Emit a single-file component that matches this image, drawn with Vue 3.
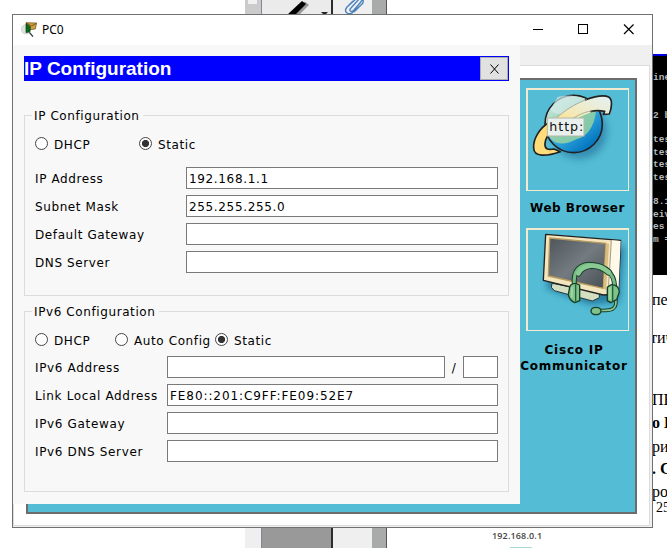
<script setup>
const ipv4 = [
  { label: 'IP Address', value: '192.168.1.1' },
  { label: 'Subnet Mask', value: '255.255.255.0' },
  { label: 'Default Gateway', value: '' },
  { label: 'DNS Server', value: '' },
]
const ipv6 = [
  { label: 'IPv6 Address', value: '', prefix: true },
  { label: 'Link Local Address', value: 'FE80::201:C9FF:FE09:52E7' },
  { label: 'IPv6 Gateway', value: '' },
  { label: 'IPv6 DNS Server', value: '' },
]
const terminal = ['', 'ine', '', '', '2 b', '', 'tes', 'tes', 'tes', 'tes', '', '8.1', 'eiv', 'es ', 'm =']
const paragraph = [
  { text: 'пен', height: 38 },
  { text: 'тич', height: 62, nudge: true },
  { text: 'ПЕ', height: 23 },
  { text: 'о В', height: 24, bold: true },
  { text: 'ри', height: 22 },
  { text: '. С', height: 23, bold: true },
  { text: 'рос', height: 16 },
  { text: '25', height: 18, small: true },
]
</script>

<template>
  <div class="screen">
    <div class="strip top">
      <div class="gutter"><i></i></div>
      <div class="tool wide">
        <svg viewBox="0 0 69 14" width="69" height="14">
          <path d="M29 15 43 1.500 47 5 37 15Z" fill="#999" />
          <path d="M25 15 40 1 44 4 33 15Z" fill="#000" />
          <path d="M59 12h7l-2 2h-3z" fill="#222" />
        </svg>
      </div>
      <div class="tool clip">
        <svg viewBox="0 0 38 14" width="38" height="14" fill="none" stroke="#4d83bd" stroke-width="1.400">
          <path d="M24-2 14 7q-3 4 0 6 3 2 6-1l10-13M27-2 18 8q-2 2-.5 3t3-.5l7-8M20 1l-5 5M30 0q1 3-2 5l-7 7" />
        </svg>
      </div>
      <div class="edge"></div>
    </div>

    <div class="strip bottom">
      <div class="gutter"></div>
      <div class="tool wide"></div>
      <div class="tool clip"></div>
      <div class="edge"></div>
    </div>
    <div class="diagram"><span>192.168.0.1</span><i></i></div>

    <div class="document">
      <pre class="terminal">{{ terminal.join('\n') }}</pre>
      <div class="lines">
        <div
          v-for="line in paragraph"
          :key="line.text"
          :class="['line', { bold: line.bold, small: line.small, nudge: line.nudge }]"
          :style="{ height: line.height + 'px' }"
        >{{ line.text }}</div>
      </div>
    </div>

    <div class="window">
      <header class="titlebar">
        <svg class="app-icon" viewBox="0 0 48 48" width="16" height="16">
          <circle cx="15" cy="22" r="14" fill="#dfe3df" stroke="#c4c8c4" stroke-width="2" />
          <path d="M15 2 47 3 43 21 20 24Z" fill="#d0a145" stroke="#6b4a12" stroke-width="2" />
          <path d="M16 3 32 12 46 4" fill="none" stroke="#6b4a12" stroke-width="2.500" />
          <path d="M15 5 28 14 27 29 15 32Z" fill="#0b6a1c" stroke="#063f0e" stroke-width="2" />
          <path d="M25 31 36 44" stroke="#333" stroke-width="4" />
        </svg>
        <span class="caption">PC0</span>
        <svg class="controls" viewBox="0 0 120 30" width="120" height="30" fill="none" stroke="#000" shape-rendering="crispEdges">
          <path d="M0 14.500h10M45.500 9.500h9v9h-9z" />
          <path d="M91 9.500 100.500 19M100.500 9.500 91 19" shape-rendering="auto" stroke-width="1.200" />
        </svg>
      </header>

      <div class="client">
        <div class="tabpane">
          <div class="desktop">
            <div class="app">
              <div class="tile">
                <svg viewBox="33 30 300 300" width="100" height="100">
                  <defs>
                    <linearGradient id="globe" x1=".15" y1=".1" x2=".8" y2=".9">
                      <stop offset="0" stop-color="#d9eee6" />
                      <stop offset=".3" stop-color="#b9dfe2" />
                      <stop offset=".55" stop-color="#35a8df" />
                      <stop offset="1" stop-color="#0074be" />
                    </linearGradient>
                    <linearGradient id="land" x1="0" y1="0" x2="1" y2="1">
                      <stop offset="0" stop-color="#d8eee8" />
                      <stop offset=".5" stop-color="#8fcfae" />
                      <stop offset="1" stop-color="#73c3a1" />
                    </linearGradient>
                    <linearGradient id="swoosh" x1="0" y1="1" x2="1" y2="0">
                      <stop offset="0" stop-color="#ffe08a" />
                      <stop offset=".45" stop-color="#f0ebc4" />
                      <stop offset="1" stop-color="#e3f1f5" />
                    </linearGradient>
                    <filter id="soft" x="-30%" y="-30%" width="160%" height="160%"><feGaussianBlur stdDeviation="11" /></filter>
                  </defs>
                  <circle cx="187" cy="154" r="83" fill="#246f9c" opacity=".6" filter="url(#soft)" />
                  <circle cx="170" cy="132" r="86" fill="url(#globe)" stroke="#222" stroke-width="5" />
                  <path d="M88 144A83 83 0 0 1 204 57Q242 80 236 101 226 164 178 178 132 202 106 180 91 166 88 144Z" fill="url(#land)" />
                  <path d="M122 51Q160 39 207 58L185 76 133 103Q103 102 101 87Z" fill="#d4ebe9" opacity=".7" />
                  <path d="M97 127C68 144 48 177 50 204 51 231 86 230 130 215L111 207C92 210 82 207 84 190 85 174 95 162 104 153Z" fill="#ffdc79" stroke="#222" stroke-width="5" stroke-linejoin="round" />
                  <path d="M120 112C156 81 205 53 249 48 281 45 290 61 279 103L257 103 263 94C240 88 191 102 158 132L125 132Z" fill="url(#swoosh)" />
                  <path d="M204 60C223 53 258 43 275 51 288 58 284 84 277 102L259 103 263 94C249 91 236 90 220 95" fill="none" stroke="#222" stroke-width="5" stroke-linejoin="round" />
                  <path d="M120 112C156 81 187 67 210 58M158 122C181 105 206 94 227 93" fill="none" stroke="#898f86" stroke-width="2" />
                  <rect x="91" y="114" width="110" height="54" fill="#e9f1ee" stroke="#b5b5a6" stroke-width="3" />
                  <text x="97" y="152" font-family="DejaVu Sans" font-size="38" textLength="102" lengthAdjust="spacing" fill="#111">http:</text>
                </svg>
              </div>
              <div class="name first">Web Browser</div>
            </div>
            <div class="app">
              <div class="tile">
                <svg viewBox="33 30 300 300" width="100" height="100" stroke-linejoin="round" stroke-linecap="round">
                  <defs>
                    <linearGradient id="glass" x1="0" y1="0" x2="1" y2="1">
                      <stop offset="0" stop-color="#4d555b" />
                      <stop offset=".5" stop-color="#747b80" />
                      <stop offset="1" stop-color="#464e54" />
                    </linearGradient>
                    <filter id="shade" x="-30%" y="-30%" width="160%" height="160%"><feGaussianBlur stdDeviation="9" /></filter>
                  </defs>
                  <path d="M95 68 322 80 307 246 220 254 90 206Z" fill="#176690" opacity=".7" filter="url(#shade)" />
                  <path d="M106 190 247 218 247 233 226 243 112 212 104 203Z" fill="#d4dfc2" stroke="#26383c" stroke-width="3" />
                  <path d="M156 200 190 207 187 230 155 222Z" fill="#507d85" />
                  <path d="M86 43 311 61 304 222 259 225 79 181Z" fill="#f3e5bd" stroke="#222" stroke-width="4" />
                  <path d="M283 61 311 63 304 222 274 223Z" fill="#fff9e9" />
                  <path d="M283 62 274 210" stroke="#a69b7b" stroke-width="3" />
                  <path d="M98 54 267 70 259 205 94 168Z" fill="url(#glass)" stroke="#b99b5d" stroke-width="4" />
                  <path d="M267 70 276 72 267 211 259 204Z" fill="#d8bd7c" />
                  <g fill="none">
                    <path d="M174 205C160 133 211 127 237 138 270 143 298 165 292 214" stroke="#173e2a" stroke-width="15" />
                    <path d="M184 160C197 135 240 125 275 157" stroke="#173e2a" stroke-width="20" />
                    <path d="M174 205C160 133 211 127 237 138 270 143 298 165 292 214" stroke="#76bd85" stroke-width="9" />
                    <path d="M184 160C197 135 240 125 275 157" stroke="#8aca92" stroke-width="14" />
                    <path d="M296 236C303 278 270 270 243 272" stroke="#173e2a" stroke-width="11" />
                    <path d="M296 236C303 278 270 270 243 272" stroke="#8aca92" stroke-width="5" />
                  </g>
                  <g fill="#7fc28a" stroke="#173e2a" stroke-width="4">
                    <path d="M158 203Q158 191 176 190L188 195V242L173 248Q156 239 154 223Z" />
                    <path d="M271 202 282 194Q306 194 307 216L299 239 281 248 271 242Z" />
                    <ellipse cx="237" cy="273" rx="15" ry="11" />
                  </g>
                  <path d="M176 195V243M287 198V243" stroke="#226138" stroke-width="4" />
                  <path d="M165 202V231M279 203V236" stroke="#b0dba9" stroke-width="4" />
                </svg>
              </div>
              <div class="name">Cisco IP<br />Communicator</div>
            </div>
          </div>
        </div>

        <section class="panel">
          <div class="banner">
            <h1>IP Configuration</h1>
            <button class="close">
              <svg viewBox="0 0 9 10" width="9" height="10"><path d="M.5.5 8.500 9.500M8.500.5.5 9.500" stroke="#000" fill="none" /></svg>
            </button>
          </div>

          <div class="group v4">
            <div class="legend"><span>IP Configuration</span></div>
            <div class="radios">
              <label><i class="dot"></i>DHCP</label>
              <label><i class="dot on"></i>Static</label>
            </div>
            <div v-for="row in ipv4" :key="row.label" class="row">
              <span class="key">{{ row.label }}</span>
              <div class="field">{{ row.value }}</div>
            </div>
          </div>

          <div class="group v6">
            <div class="legend"><span>IPv6 Configuration</span></div>
            <div class="radios">
              <label><i class="dot"></i>DHCP</label>
              <label><i class="dot"></i>Auto Config</label>
              <label><i class="dot on"></i>Static</label>
            </div>
            <div v-for="row in ipv6" :key="row.label" class="row">
              <span class="key">{{ row.label }}</span>
              <div class="field">{{ row.value }}</div>
              <template v-if="row.prefix">
                <span class="slash">/</span>
                <div class="field prefix"></div>
              </template>
            </div>
          </div>
        </section>
      </div>
    </div>
  </div>
</template>

<style>
html, body { margin: 0; background: #fff; overflow: hidden; }
</style>

<style scoped>
* { box-sizing: border-box; }
.screen { position: relative; width: 667px; height: 548px; overflow: hidden; background: #fff; font: 12px/16px "DejaVu Sans", sans-serif; color: #000; }
svg { display: block; }

.strip { position: absolute; left: 245px; display: flex; width: 142px; }
.strip.top { top: 0; height: 14px; }
.strip.bottom { top: 528px; height: 20px; }
.gutter { width: 16px; background: #cbcbcb; padding-left: 3px; }
.gutter i { display: block; width: 9px; height: 4px; background: #f0f0f0; }
.bottom .gutter { background: #efefef; }
.tool { background: #ebebeb; overflow: hidden; }
.wide { width: 72px; border-left: 1px solid #85859a; border-right: 2px solid #2c2c2c; }
.bottom .wide { background: #999; }
.clip { width: 39px; background: #efefef; }
.edge { flex: 1; background: #a9abab; border-right: 1px solid #555; }

.diagram { position: absolute; left: 492px; top: 530px; width: 60px; height: 18px; display: flex; flex-direction: column; color: #444; font: 600 9px/12px "Open Sans", sans-serif; letter-spacing: .15px; }
.diagram i { margin: 5px 0 0 18px; width: 22px; height: 1px; background: #a8d8dc; }

.document { position: absolute; left: 653px; top: 54px; width: 14px; height: 494px; overflow: hidden; }
.terminal { margin: 0; height: 221px; padding-top: 4px; border-top: 2px solid #0000e0; background: #000; color: #b8b8b8; font: bold 9.500px/12.400px "Liberation Mono", monospace; }
.lines { padding-top: 15px; }
.line { font: 16px/20px "Liberation Serif", serif; white-space: nowrap; margin-left: -1px; }
.line.bold { font-weight: bold; }
.line.nudge { margin-left: -3px; }
.line.small { font-size: 14px; margin-left: 3px; }

.window { position: absolute; left: 12px; top: 14px; width: 641px; height: 514px; border: 1px solid #707070; background: #f0f0f0; display: flex; flex-direction: column; }
.titlebar { height: 30px; background: #fff; display: flex; align-items: center; padding-left: 8px; }
.caption { margin-left: 5px; font: 12px/30px "Noto Sans", sans-serif; flex: 1; }
.app-icon { margin-top: -1px; }
.controls { margin-right: -1px; }
.client { position: relative; flex: 1; display: flex; padding: 20px 2px 1px 0; }
.tabpane { flex: 1; border: 1px solid #dcdcdc; background: #fff; padding: 12px 12px 11px 12px; display: flex; }
.desktop { flex: 1; border: 2px solid #6c6c6c; background: #54bcd4; padding: 8px 0 0 492px; display: flex; flex-direction: column; gap: 12px; }
.app { width: 108px; }
.tile { width: 103px; height: 103px; margin-left: 6px; border: 1px solid #f3ead0; border-width: 2px 1px 1px 2px; }
.name { margin-top: 11px; font: bold 12px/16px "DejaVu Sans", sans-serif; letter-spacing: .75px; text-align: center; white-space: nowrap; }
.name.first { margin-top: 9px; margin-left: 7px; letter-spacing: .5px; }

.panel { position: absolute; left: 0; top: 0; width: 507px; height: 459px; background: #f8f8f8; padding: 11px 11px 0; letter-spacing: .6px; }
.banner { height: 25px; background: #00f; display: flex; justify-content: space-between; padding: 1px; padding-left: 0; }
h1 { margin: 0; color: #fff; font: bold 19px/23px "Liberation Sans", sans-serif; letter-spacing: 0; }
.close { width: 28px; height: 23px; border: 1px solid #adadad; background: #e1e1e1; padding: 0; display: flex; align-items: center; justify-content: center; }
.group { width: 485px; height: 181px; border: 1px solid #dcdcdc; padding: 0 10px; }
.v4 { margin-top: 34px; }
.v6 { margin-top: 15px; }
.legend { height: 8px; display: flex; }
.legend span { margin: -9px 0 0 -3px; padding: 0 3px 0 2px; height: 17px; line-height: 18px; background: #f8f8f8; white-space: nowrap; }
.radios { display: flex; height: 40px; padding-top: 12px; }
.radios label { display: flex; height: 17px; line-height: 19px; white-space: nowrap; }
.v4 label:first-child { width: 104px; }
.v4 .radios { height: 43px; padding-top: 12px; }
.v6 .radios { height: 36px; }
.v6 label:nth-child(1) { width: 80px; }
.v6 label:nth-child(2) { width: 100px; }
.dot { width: 13px; height: 13px; margin: 1px 6px 0 0; border: 1px solid #444; border-radius: 50%; background: #fff; flex: none; }
.dot.on { background: radial-gradient(circle, #333 3.300px, #fff 3.900px); }
.row { display: flex; height: 28px; }
.key { line-height: 25px; white-space: nowrap; width: 151px; flex: none; }
.v6 .key { width: 132px; letter-spacing: .65px; }
.field { flex: 1; height: 22px; border: 1px solid #7a7a7a; background: #fff; padding-left: 2px; line-height: 22px; white-space: nowrap; letter-spacing: .65px; }
.v6 .field { letter-spacing: .92px; }
.slash { width: 18px; text-align: center; line-height: 24px; }
.field.prefix { flex: none; width: 35px; }
</style>
